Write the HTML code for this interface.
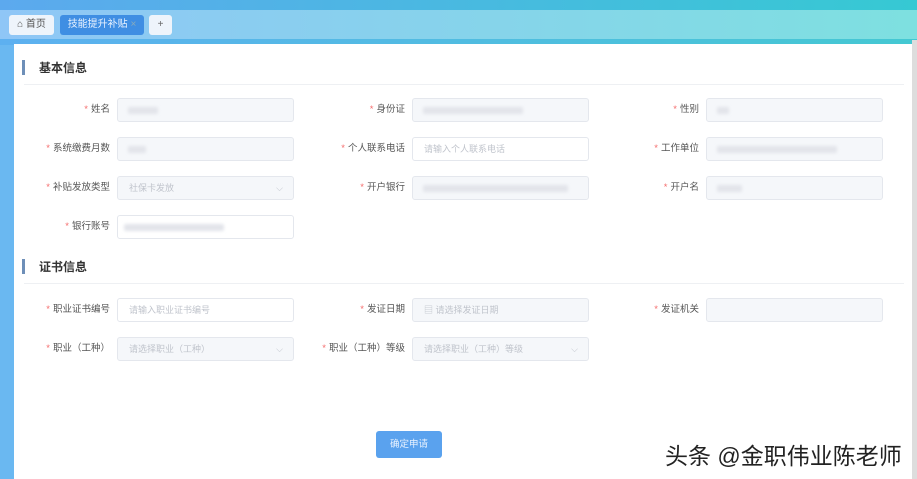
<!DOCTYPE html>
<html><head><meta charset="utf-8"><style>
*{margin:0;padding:0;box-sizing:border-box}
body{width:917px;height:479px;overflow:hidden;position:relative;background:#fff;font-family:"Liberation Sans","Noto Sans CJK SC",sans-serif}
.top{position:absolute;left:0;top:0;width:917px;height:10px;background:linear-gradient(90deg,#5ca9ee,#36c9d3)}
.tabs{position:absolute;left:0;top:10px;width:917px;height:29px;background:linear-gradient(90deg,#8fc6f6,#7ee0e0)}
.strip{position:absolute;left:0;top:39px;width:917px;height:6px;background:linear-gradient(90deg,#5db0f0,#44c8d2)}
.left{position:absolute;left:0;top:45px;width:14px;height:434px;background:#6ab8f1}
.panel{position:absolute;left:14px;top:44px;width:898px;height:435px;background:#fff}
.sb{position:absolute;left:912px;top:40px;width:5px;height:439px;background:#ddd}
.tab{position:absolute;top:15px;height:20px;border-radius:3px;font-size:10px;line-height:20px;text-align:center}
.sec{position:absolute;left:22px;font-size:12px;font-weight:bold;color:#333}
.sec::before{content:"";position:absolute;left:0;top:1px;width:3px;height:15px;background:#6e8fb8}
.sec span{margin-left:17px}
.hr{position:absolute;left:24px;width:880px;height:1px;background:#eef0f3}
.lb{position:absolute;width:100px;text-align:right;font-size:9.5px;color:#555;line-height:24px;height:24px}
.lb i{color:#f56c6c;font-style:normal;margin-right:3px}
.in{position:absolute;width:177px;height:24px;border:1px solid #e4e7ed;border-radius:3px;background:#f5f7fa;font-size:9px;color:#c0c4cc;line-height:22px;padding-left:11px}
.w{background:#fff}
.blur{position:absolute;top:8px;height:7px;background:#e2e4ea;border-radius:2px;filter:blur(1.5px)}
.ar{position:absolute;right:10px;top:0;color:#c0c4cc;font-size:9px}
</style></head><body>
<div class="top"></div><div class="tabs"></div><div class="strip"></div>
<div class="left"></div><div class="panel"></div><div class="sb"></div>
<div class="tab" style="left:9px;width:45px;background:#eef4fb;color:#555">⌂ 首页</div>
<div class="tab" style="left:60px;width:84px;background:#3f8ee3;color:#e8f2ff">技能提升补贴 <span style="color:#8ab">×</span></div>
<div class="tab" style="left:149px;width:23px;background:#eef4fb;color:#666">+</div>

<div class="sec" style="top:59px"><span>基本信息</span></div>
<div class="hr" style="top:84px"></div>

<div class="lb" style="left:10px;top:98px"><i>*</i>姓名</div>
<div class="in" style="left:117px;top:98px"><div class="blur" style="left:10px;width:30px"></div></div>
<div class="lb" style="left:305px;top:98px"><i>*</i>身份证</div>
<div class="in" style="left:412px;top:98px"><div class="blur" style="left:10px;width:100px"></div></div>
<div class="lb" style="left:599px;top:98px"><i>*</i>性别</div>
<div class="in" style="left:706px;top:98px"><div class="blur" style="left:10px;width:12px"></div></div>

<div class="lb" style="left:10px;top:137px"><i>*</i>系统缴费月数</div>
<div class="in" style="left:117px;top:137px"><div class="blur" style="left:10px;width:18px"></div></div>
<div class="lb" style="left:305px;top:137px"><i>*</i>个人联系电话</div>
<div class="in w" style="left:412px;top:137px">请输入个人联系电话</div>
<div class="lb" style="left:599px;top:137px"><i>*</i>工作单位</div>
<div class="in" style="left:706px;top:137px"><div class="blur" style="left:10px;width:120px"></div></div>

<div class="lb" style="left:10px;top:176px"><i>*</i>补贴发放类型</div>
<div class="in" style="left:117px;top:176px">社保卡发放<span class="ar">⌵</span></div>
<div class="lb" style="left:305px;top:176px"><i>*</i>开户银行</div>
<div class="in" style="left:412px;top:176px"><div class="blur" style="left:10px;width:145px"></div></div>
<div class="lb" style="left:599px;top:176px"><i>*</i>开户名</div>
<div class="in" style="left:706px;top:176px"><div class="blur" style="left:10px;width:25px"></div></div>

<div class="lb" style="left:10px;top:215px"><i>*</i>银行账号</div>
<div class="in w" style="left:117px;top:215px"><div class="blur" style="left:6px;width:100px"></div></div>

<div class="sec" style="top:258px"><span>证书信息</span></div>
<div class="hr" style="top:283px"></div>

<div class="lb" style="left:10px;top:298px"><i>*</i>职业证书编号</div>
<div class="in w" style="left:117px;top:298px">请输入职业证书编号</div>
<div class="lb" style="left:305px;top:298px"><i>*</i>发证日期</div>
<div class="in" style="left:412px;top:298px">▤ 请选择发证日期</div>
<div class="lb" style="left:599px;top:298px"><i>*</i>发证机关</div>
<div class="in" style="left:706px;top:298px"></div>

<div class="lb" style="left:10px;top:337px"><i>*</i>职业（工种）</div>
<div class="in" style="left:117px;top:337px">请选择职业（工种）<span class="ar">⌵</span></div>
<div class="lb" style="left:305px;top:337px"><i>*</i>职业（工种）等级</div>
<div class="in" style="left:412px;top:337px">请选择职业（工种）等级<span class="ar">⌵</span></div>

<div style="position:absolute;left:376px;top:431px;width:66px;height:27px;background:#5aa2ee;border-radius:3px;color:#e8f2ff;font-size:9.5px;line-height:27px;text-align:center">确定申请</div>

<div style="position:absolute;left:665px;top:437px;font-size:23px;color:#222;text-shadow:1px 1px 0 #fff,-1px -1px 0 #fff;letter-spacing:0px;white-space:nowrap">头条 @金职伟业陈老师</div>
</body></html>
